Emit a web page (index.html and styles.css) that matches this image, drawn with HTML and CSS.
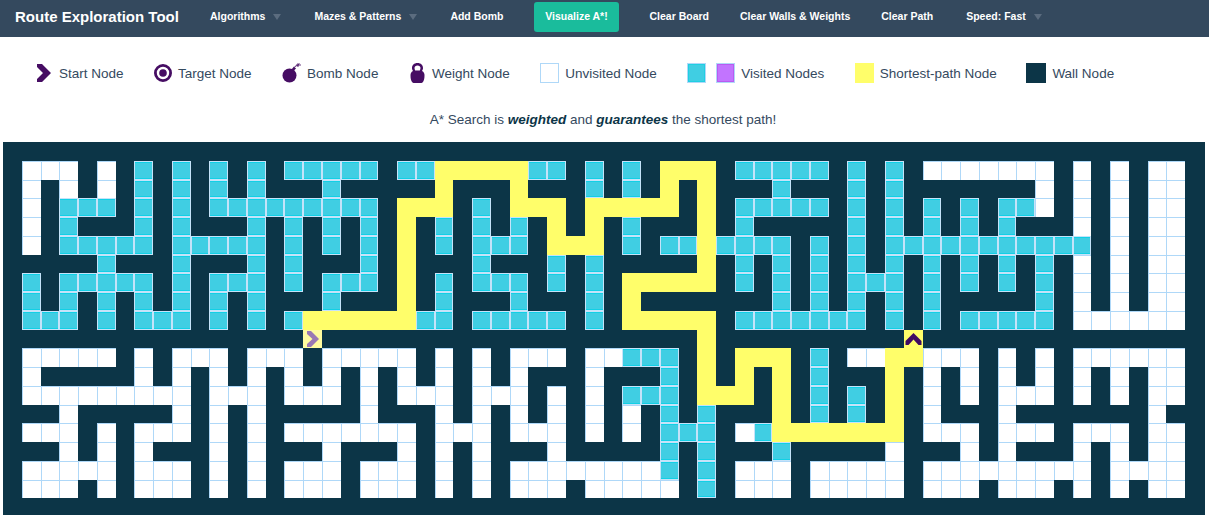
FILE: index.html
```html
<!DOCTYPE html>
<html lang="en">
<head>
<meta charset="utf-8">
<title>Route Exploration Tool</title>
<link rel="stylesheet" href="styles.css">
</head>
<body>
<header class="topbar">
  <a class="brand">Route Exploration Tool</a>
  <nav class="menu">
    <a class="menu-item">Algorithms<span class="caret"></span></a>
    <a class="menu-item">Mazes &amp; Patterns<span class="caret"></span></a>
    <a class="menu-item">Add Bomb</a>
    <a class="visualize">Visualize A*!</a>
    <a class="menu-item">Clear Board</a>
    <a class="menu-item">Clear Walls &amp; Weights</a>
    <a class="menu-item">Clear Path</a>
    <a class="menu-item menu-item-speed">Speed: Fast<span class="caret"></span></a>
  </nav>
</header>
<ul class="legend">
  <li class="legend-item">
    <svg class="icon icon-start" viewBox="0 0 14 18"><path d="M0 0H5L14 9L5 18H0V15L6 9L0 3Z"/></svg>Start Node
  </li>
  <li class="legend-item">
    <svg class="icon icon-target" viewBox="0 0 18 18"><circle cx="9" cy="9" r="7.600" fill="none" stroke-width="2.800"/><circle cx="9" cy="9" r="3.800" class="fill"/></svg>Target Node
  </li>
  <li class="legend-item">
    <svg class="icon icon-bomb" viewBox="0 0 19 20"><circle cx="7.500" cy="12.500" r="7" class="fill"/><path d="M9.500 6.500L12 3.500L14 5.500L12 7.500Z" class="fill"/><path d="M13 4C13.500 2.500 14.500 2 15.500 2" fill="none" stroke-width="1"/><path d="M16 0V4M14.500 2H19M17.500 0.500L15 3.500" fill="none" stroke-width="0.800"/></svg>Bomb Node
  </li>
  <li class="legend-item">
    <svg class="icon icon-weight" viewBox="0 0 17 20"><path class="fill" d="M8.500 0C5 0 3 2.200 3 5C3 6.300 3.400 7 4 8C2 9 1.500 10.500 1.500 12.500C1.500 15.500 2 18 3.500 19.500C4 20 5 20 6 20H11C12 20 13 20 13.500 19.500C15 18 15.500 15.500 15.500 12.500C15.500 10.500 15 9 13 8C13.600 7 14 6.300 14 5C14 2.200 12 0 8.500 0ZM8.500 2.500C10.300 2.500 11.500 3.500 11.500 5C11.500 6 11.200 6.800 10.800 7.500H6.200C5.800 6.800 5.500 6 5.500 5C5.500 3.500 6.700 2.500 8.500 2.500Z"/></svg>Weight Node
  </li>
  <li class="legend-item"><span class="swatch swatch-unvisited"></span>Unvisited Node</li>
  <li class="legend-item"><span class="swatch swatch-visited"></span><span class="swatch swatch-purple"></span>Visited Nodes</li>
  <li class="legend-item"><span class="swatch swatch-path"></span>Shortest-path Node</li>
  <li class="legend-item legend-item-wall"><span class="swatch swatch-wall"></span>Wall Node</li>
</ul>
<p class="description">A* Search is <strong>weighted</strong> and <strong>guarantees</strong> the shortest path!</p>
<main class="board" id="board"></main>
<script src="board.js"></script>
</body>
</html>
```
FILE: styles.css
```css
* { box-sizing: border-box; }
html, body { margin: 0; height: 515px; overflow: hidden; background: #fff; }
body { font-family: "Liberation Sans", Arial, sans-serif; color: #34495e; }

.topbar { display: flex; align-items: center; height: 37px; padding-bottom: 5px; background: #34495e; color: #fff; }
.brand { margin-left: 15px; font-size: 15px; font-weight: bold; width: 179.500px; white-space: nowrap; }
.menu { display: flex; align-items: center; }
.menu-item { display: flex; align-items: center; padding: 0 15.500px; font-size: 10.500px; font-weight: bold; white-space: nowrap; }
.menu-item-speed { margin-left: 2px; }
.caret { width: 0; height: 0; margin: 2px 2px 0 8px; border-left: 4px solid transparent; border-right: 4px solid transparent; border-top: 6px solid #5b6c7f; }
.visualize { display: flex; align-items: center; justify-content: center; width: 85px; height: 30px; margin: 2px 15px 0; padding-bottom: 2px; background: #1abc9c; border-radius: 3px; font-size: 10.500px; font-weight: bold; }

.legend { display: flex; align-items: center; gap: 30.500px; list-style: none; margin: 0; padding: 26px 0 0 37px; height: 46px; font-size: 13.500px; }
.legend-item { display: flex; align-items: center; height: 20px; white-space: nowrap; }
.legend-item-wall { margin-left: -1px; }
.icon { display: block; margin-right: 6px; fill: #460d63; stroke: #460d63; stroke-width: 0; }
.icon .fill { fill: #460d63; stroke: none; }
.icon-start { width: 14px; height: 18px; margin-right: 8px; }
.icon-target { width: 18px; height: 18px; }
.icon-bomb { width: 19px; height: 20px; }
.icon-weight { width: 17px; height: 20px; }
.swatch { display: block; width: 19px; height: 20px; margin-right: 6px; }
.swatch-unvisited { border: 1px solid #afd8f8; }
.swatch-visited { background: #40cee3; border: 1px solid #afd8f8; box-shadow: inset 0 0 0 1px #20cfe2; margin-right: 10px; }
.swatch-purple { background: #c274ff; border: 1px solid #afd8f8; box-shadow: inset 0 0 0 1px #b95bf0; }
.swatch-path { background: #fffe6a; }
.swatch-wall { background: #0c3547; width: 20px; }

.description { margin: 29px 0 14px; padding-right: 3px; height: 16px; line-height: 16px; font-size: 13.500px; text-align: center; }
.description strong { font-style: italic; color: #0c3547; }

.board { display: grid; grid-template-columns: repeat(64, 1fr); grid-auto-rows: 18.760px; width: 1202px; padding-right: 1px; margin-left: 3px; background: #0c3547; }
.cell-open { background: #fff; border-left: 1px solid #afd8f8; border-top: 1px solid #afd8f8; }
.cell-visited { background: #40cee3; border: 1px solid #c5e3f9; box-shadow: inset 0 -1px 0 #12d0e6, inset 0 1px 0 #12d0e6; }
.cell-path { background: #fffe6a; }
.cell-start { background: #fffb9f; display: flex; align-items: center; justify-content: center; }
.cell-target { background: #fffe6a; display: flex; align-items: center; justify-content: center; }
.marker { display: block; fill: #3f0a63; }
.marker-start { width: 14px; height: 16px; fill: #9a78b4; }
.marker-target { width: 17px; height: 12px; }
```
FILE: board.js
```js
var rows = [
  "################################################################",
  "# ... # . # v # v # v # v # vvvvv # vv yyyyy vv # v # v # yyy # vvvvv # v # v # ....... # . # . # .. #",
  "# . # . # . # v # v # v # v ### v ##### y ### y ### v # v # y # y ### v ### v # v ####### . # . # . # .. #",
  "# . # vvv # v # v # vvvvvvvvv # yyy # v # yyy # yyyyy # y # vvvvv # v # v # v # v # vv . # . # . # .. #",
  "# . # v ### v # v ### v # v # v # v # y # v # v # v # y # y # v ### y # v ##### v # v # v # v # v ### . # . # .. #",
  "# . # vvvvv # vvvvv # v # v # v # y # v # vvv # yyy # v # vv y vvvv # v # v # vvvvvvvvvvv # . # .. #",
  "##### v ### v ### v # v ### v # y ### v ### v # v ##### y # v # v # v # v # v # v # v # v # v # . # . # .. #",
  "# v # vvvvv # v # vvv # v # vvv # y # v # vvv # v # v # yyyyy # v # v # v # vvv # v # v # v # v # . # . # .. #",
  "# v # v # v # v # v # v # v ### v ### y # v ### v ### v # y ####### v # v # v # v # v ##### v # . # . # .. #",
  "# vvv # v # vvv # v # v # v yyyyyy vv # vvvvv # v # yyyyy # vvvvvvv # v # v # vvvvv # ...... #",
  "########## ######S### ########## #######y## ########T# ########## ####",
  "#.....#.#. ..#...#... ..#.#.#... #..vvv#y#y yy#v#..yy. ..#.#.#... ...#",
  "#.#####.#. #.#.#.#.#. #.#.#.#.## #.###v#y#y #y#v###y#. #.#.#.#.#. #..#",
  "#......... #...#...#. #...#...#. #.#vvv#yyy #y#v#v#y#. #.#...#.#. #..#",
  "###.#####. #.#.#####. ###.#.#.#. #.#.#v#v## #y#v#v#y#. ###.###### #.##",
  "#...#.#... #.#.#..... ..#...#... #.#.#vvv#. vyyyyyyy#. ..#...#... #..#",
  "###.#.#.## #.#.###.## #.#.#.###. #####v#v## #v#####.## #.#.###.#. #..#",
  "#.....#... #.#.#...#. ..#.#.#... .....v#v#. ..#.....#. ........#. ...#",
  "#...#.#... #.#.#...#. ..#.#.#... #.....#v#. ..#.....#. ..#...#.#. #..#",
  "################################################################"
];
var names = { "#": "cell", ".": "cell cell-open", v: "cell cell-visited", y: "cell cell-path", S: "cell cell-start", T: "cell cell-target" };
var board = document.getElementById("board");
rows.forEach(function (row) {
  row.replace(/ /g, "").split("").forEach(function (ch) {
    var cell = document.createElement("div");
    cell.className = names[ch];
    if (ch === "S") {
      cell.innerHTML = '<svg class="marker marker-start" viewBox="0 0 14 16"><path d="M1 0H5L13 8L5 16H1V13L6.500 8L1 3Z"/></svg>';
    }
    if (ch === "T") {
      cell.innerHTML = '<svg class="marker marker-target" viewBox="0 0 16 12"><path d="M8 0L16 8V12H13L8 6.500L3 12H0V8Z"/></svg>';
    }
    board.appendChild(cell);
  });
});
```
